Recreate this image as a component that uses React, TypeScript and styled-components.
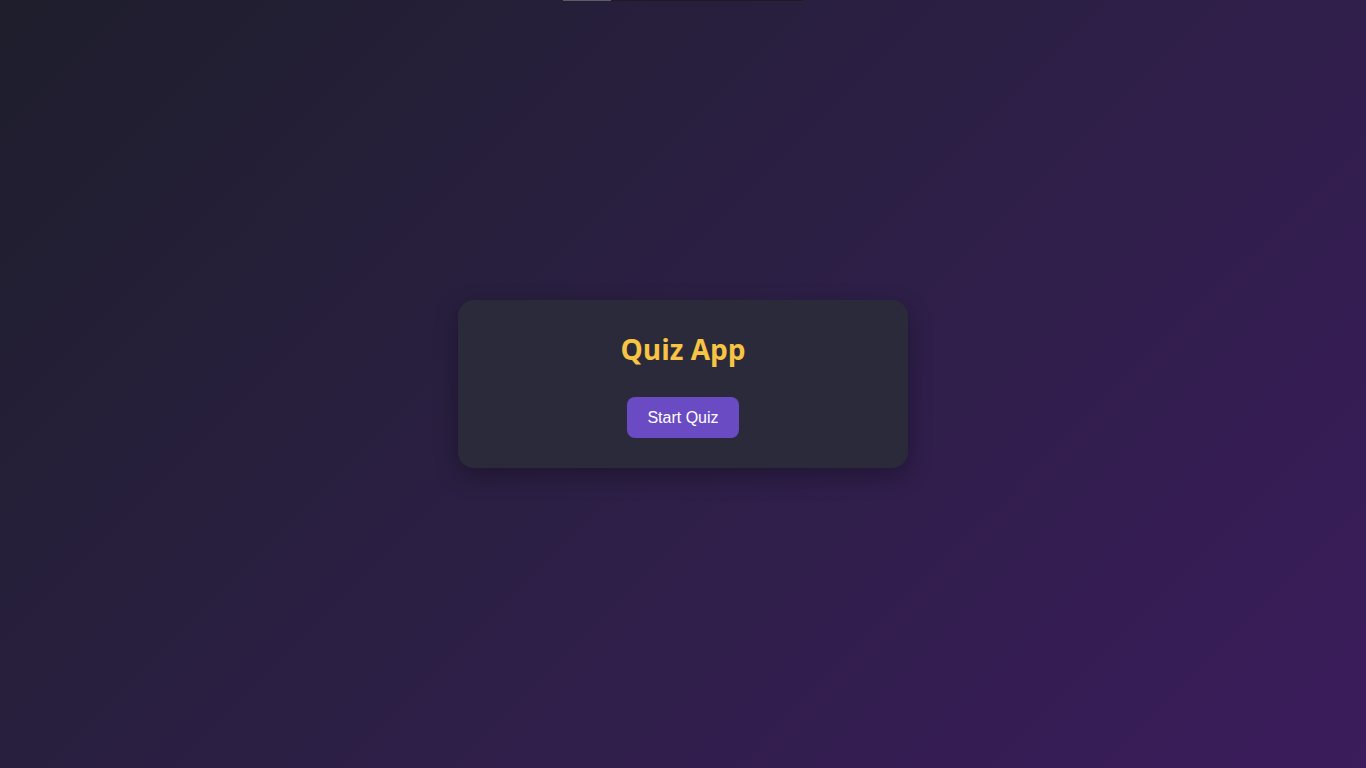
import React from "react";
import styled, { createGlobalStyle } from "styled-components";

const GlobalStyle = createGlobalStyle`
  html, body {
    margin: 0;
    padding: 0;
  }
  body {
    font-family: "Segoe UI", "Open Sans", "Noto Sans", sans-serif;
    background: linear-gradient(135deg, #1e1e2c 0%, #2c1f45 50%, #3b1c5c 100%);
    min-height: 100vh;
  }
`;

const Page = styled.div`
  display: flex;
  flex-direction: column;
  align-items: center;
  min-height: 100vh;
`;

// thin progress strip at the very top, doesn't push the card down
const Progress = styled.div`
  width: 240px;
  height: 1px;
  margin-bottom: -1px;
  background: #1c1c20;
  display: flex;
`;

const ProgressFill = styled.div<{ $pct: number }>`
  width: ${(p) => p.$pct}%;
  background: #5c5c62;
`;

const Main = styled.main`
  flex: 1;
  display: flex;
  align-items: center;
  justify-content: center;
  width: 100%;
`;

const Card = styled.section`
  width: 450px;
  box-sizing: border-box;
  padding: 31px 30px 30px;
  background: #2b2a3a;
  border-radius: 16px;
  box-shadow: 0 8px 24px rgba(0, 0, 0, 0.3);
  display: flex;
  flex-direction: column;
  align-items: center;
`;

const Title = styled.h1`
  margin: 0 0 30px;
  font-size: 28px;
  line-height: 36px;
  font-weight: 700;
  color: #f7c443;
`;

const StartButton = styled.button`
  height: 41px;
  padding: 0 20px;
  border: 0;
  border-radius: 8px;
  background: #6a4bc4;
  color: #ffffff;
  font-family: "Liberation Sans", Arial, sans-serif;
  font-size: 16px;
  cursor: pointer;
`;

export default function App() {
  return (
    <>
      <GlobalStyle />
      <Page>
        <Progress>
          <ProgressFill $pct={20} />
        </Progress>
        <Main>
          <Card>
            <Title>Quiz App</Title>
            <StartButton type="button">Start Quiz</StartButton>
          </Card>
        </Main>
      </Page>
    </>
  );
}
